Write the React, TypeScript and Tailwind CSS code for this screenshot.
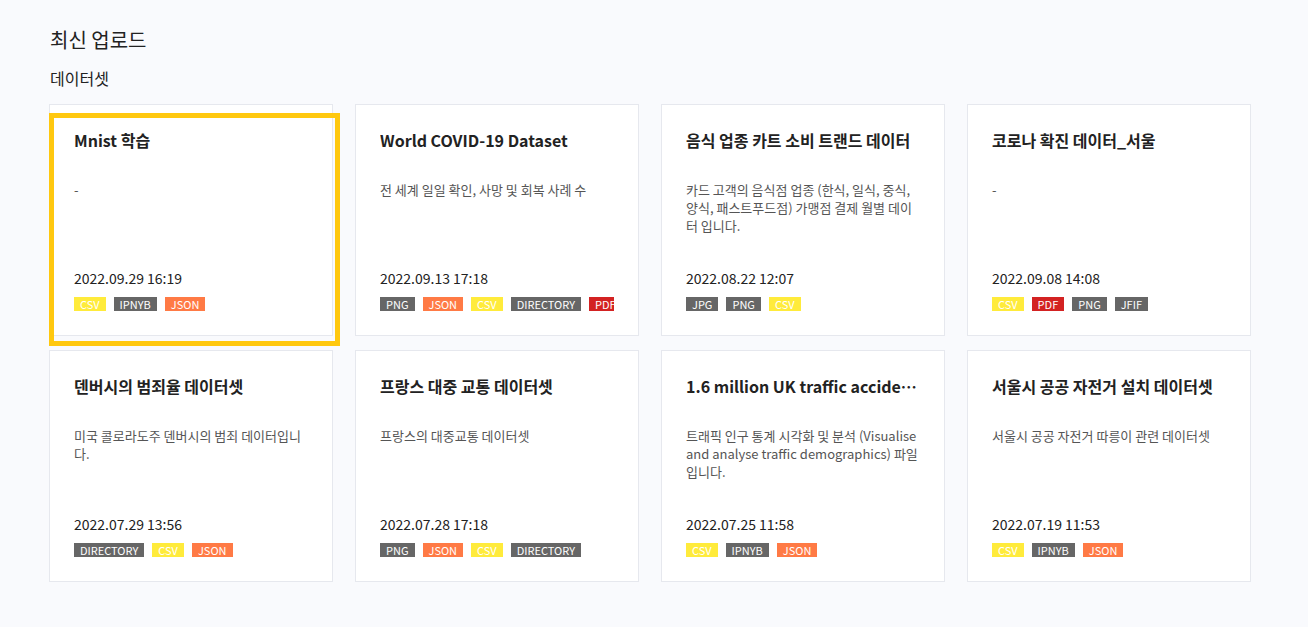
import React from "react";

type Tag = "CSV" | "IPNYB" | "JSON" | "PNG" | "DIRECTORY" | "PDF" | "JPG" | "JFIF";

const tagColor: Record<Tag, string> = {
  CSV: "bg-[#ffeb3b]",
  IPNYB: "bg-[#666666]",
  JSON: "bg-[#ff7a45]",
  PNG: "bg-[#666666]",
  DIRECTORY: "bg-[#666666]",
  PDF: "bg-[#d32222]",
  JPG: "bg-[#666666]",
  JFIF: "bg-[#666666]",
};

interface Dataset {
  title: string;
  description: string;
  date: string;
  tags: Tag[];
}

const datasets: Dataset[] = [
  { title: "Mnist 학습", description: "-", date: "2022.09.29 16:19", tags: ["CSV", "IPNYB", "JSON"] },
  {
    title: "World COVID-19 Dataset",
    description: "전 세계 일일 확인, 사망 및 회복 사례 수",
    date: "2022.09.13 17:18",
    tags: ["PNG", "JSON", "CSV", "DIRECTORY", "PDF"],
  },
  {
    title: "음식 업종 카트 소비 트랜드 데이터",
    description: "카드 고객의 음식점 업종 (한식, 일식, 중식, 양식, 패스트푸드점) 가맹점 결제 월별 데이터 입니다.",
    date: "2022.08.22 12:07",
    tags: ["JPG", "PNG", "CSV"],
  },
  { title: "코로나 확진 데이터_서울", description: "-", date: "2022.09.08 14:08", tags: ["CSV", "PDF", "PNG", "JFIF"] },
  {
    title: "덴버시의 범죄율 데이터셋",
    description: "미국 콜로라도주 덴버시의 범죄 데이터입니다.",
    date: "2022.07.29 13:56",
    tags: ["DIRECTORY", "CSV", "JSON"],
  },
  {
    title: "프랑스 대중 교통 데이터셋",
    description: "프랑스의 대중교통 데이터셋",
    date: "2022.07.28 17:18",
    tags: ["PNG", "JSON", "CSV", "DIRECTORY"],
  },
  {
    title: "1.6 million UK traffic accidents",
    description: "트래픽 인구 통계 시각화 및 분석 (Visualise and analyse traffic demographics) 파일 입니다.",
    date: "2022.07.25 11:58",
    tags: ["CSV", "IPNYB", "JSON"],
  },
  {
    title: "서울시 공공 자전거 설치 데이터셋",
    description: "서울시 공공 자전거 따릉이 관련 데이터셋",
    date: "2022.07.19 11:53",
    tags: ["CSV", "IPNYB", "JSON"],
  },
];

function DatasetCard({ data, selected }: { data: Dataset; selected?: boolean }) {
  return (
    <div className="relative">
      <div className="flex flex-col h-[232px] overflow-hidden bg-white border border-[#e6e8ee] px-[24px] pt-[23px]">
        <h3 className="h-[24px] leading-[24px] text-[16px] font-bold text-[#222] truncate">{data.title}</h3>
        <p className="mt-[29px] h-[72px] text-[13px] leading-[18px] text-[#555]">{data.description}</p>
        <div className="mt-[15px] h-[20px] leading-[20px] text-[14px] text-[#222]">{data.date}</div>
        <div className="mt-[9px] flex gap-[8px] overflow-hidden h-[14px] shrink-0">
          {data.tags.map((t) => (
            <span
              key={t}
              className={`${tagColor[t]} shrink-0 h-[14px] px-[6px] text-[11px] leading-[14px] text-white`}
            >
              {t}
            </span>
          ))}
        </div>
      </div>
      {selected && (
        <div className="absolute left-0 top-[9px] w-[291px] h-[233px] border-[5px] border-[#ffc80f] pointer-events-none" />
      )}
    </div>
  );
}

export default function App() {
  return (
    <div
      className="min-h-[627px] bg-[#f9fafd] pl-[49px] pt-[26px]"
      style={{ fontFamily: '"Noto Sans CJK KR", "Noto Sans", sans-serif' }}
    >
      <h1 className="pl-[1px] text-[20px] leading-[28px] text-[#222]">최신 업로드</h1>
      <h2 className="mt-[13px] pl-[1px] text-[16px] leading-[22px] text-[#222]">데이터셋</h2>
      <div className="mt-[15px] grid grid-cols-[repeat(4,284px)] gap-x-[22px] gap-y-[14px]">
        {datasets.map((d, i) => (
          <DatasetCard key={d.title} data={d} selected={i === 0} />
        ))}
      </div>
    </div>
  );
}
